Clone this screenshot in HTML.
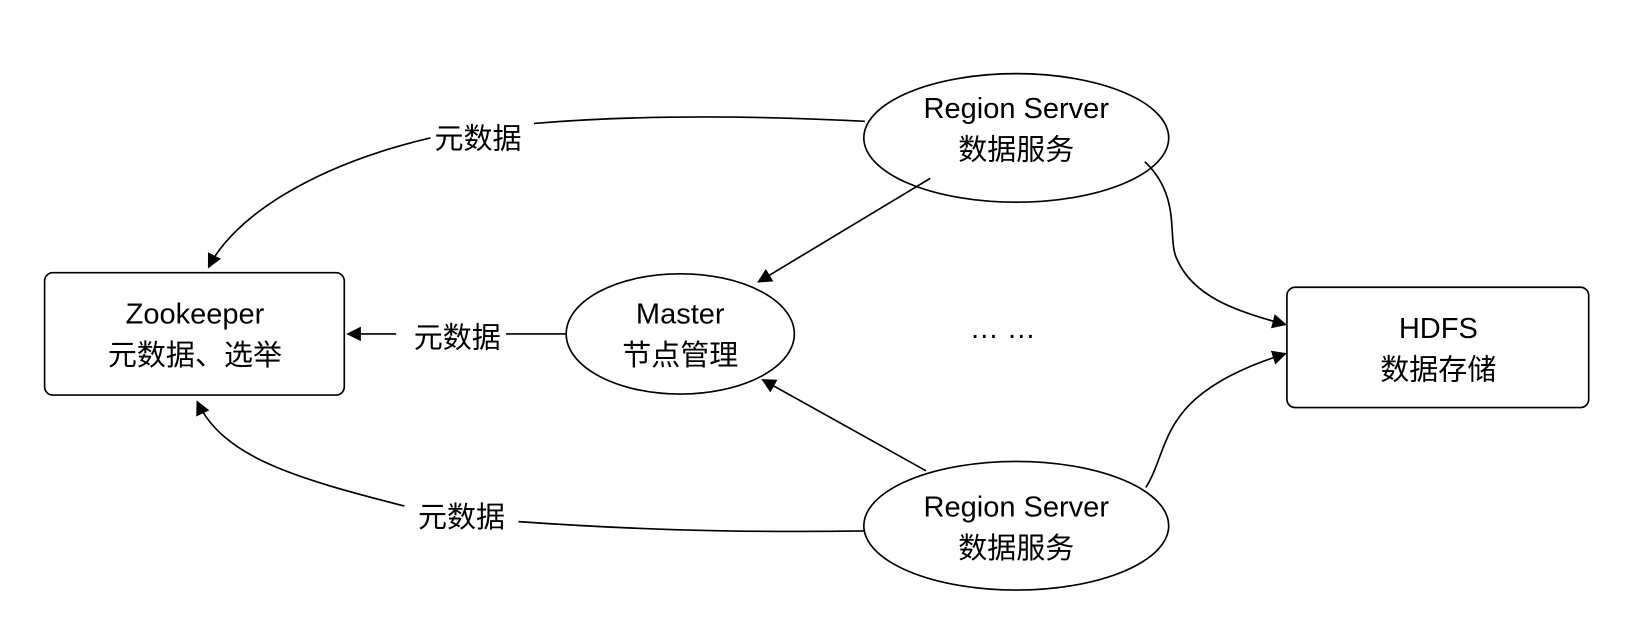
<!DOCTYPE html>
<html><head><meta charset="utf-8"><style>
html,body{margin:0;padding:0;background:#fff;}
svg text{font-family:"Liberation Sans","Noto Sans CJK SC",sans-serif;font-size:28px;fill:#000;}
</style></head><body>
<svg width="1626" height="628" viewBox="0 0 1626 628" xmlns="http://www.w3.org/2000/svg">
<defs><marker id="a" markerWidth="14" markerHeight="14" refX="13" refY="7" orient="auto" markerUnits="userSpaceOnUse"><path d="M0,0 L14,7 L0,14 Z" fill="#000"/></marker></defs>
<g transform="scale(1.037)">
<g fill="none" stroke="#000" stroke-width="1.6">
<rect x="43" y="263" width="289" height="118" rx="8"/>
<rect x="1241" y="277" width="291" height="116" rx="8"/>
<ellipse cx="656" cy="322" rx="110" ry="58"/>
<ellipse cx="980" cy="133" rx="147" ry="62"/>
<ellipse cx="980" cy="507" rx="147" ry="62"/>
<path d="M834,117 C700,110 600,112 515,119"/>
<path d="M415,133 C300,160 225,210 201,258" marker-end="url(#a)"/>
<path d="M546,322 L488,322"/>
<path d="M382,322 L335,322" marker-end="url(#a)"/>
<path d="M834,512 C700,514 600,510 500,503"/>
<path d="M390,488 C280,460 215,440 190,387" marker-end="url(#a)"/>
<path d="M897,172 L731,272" marker-end="url(#a)"/>
<path d="M893,454 L735,366" marker-end="url(#a)"/>
<path d="M1104,156 C1140,190 1125,230 1135,250 C1150,285 1190,300 1240,313" marker-end="url(#a)"/>
<path d="M1105,470 C1130,430 1115,380 1240,341" marker-end="url(#a)"/>
</g>
<text x="188" y="312" text-anchor="middle">Zookeeper</text>
<text x="188" y="352" text-anchor="middle">元数据、选举</text>
<text x="656" y="312" text-anchor="middle">Master</text>
<text x="656" y="352" text-anchor="middle">节点管理</text>
<text x="980" y="114" text-anchor="middle">Region Server</text>
<text x="980" y="154" text-anchor="middle">数据服务</text>
<text x="980" y="498" text-anchor="middle">Region Server</text>
<text x="980" y="538" text-anchor="middle">数据服务</text>
<text x="1387" y="326" text-anchor="middle">HDFS</text>
<text x="1387" y="366" text-anchor="middle">数据存储</text>
<text x="461" y="143" text-anchor="middle">元数据</text>
<text x="441" y="335" text-anchor="middle">元数据</text>
<text x="445" y="508" text-anchor="middle">元数据</text>
<text x="967" y="326" text-anchor="middle">… …</text>
</g>
</svg>
</body></html>
